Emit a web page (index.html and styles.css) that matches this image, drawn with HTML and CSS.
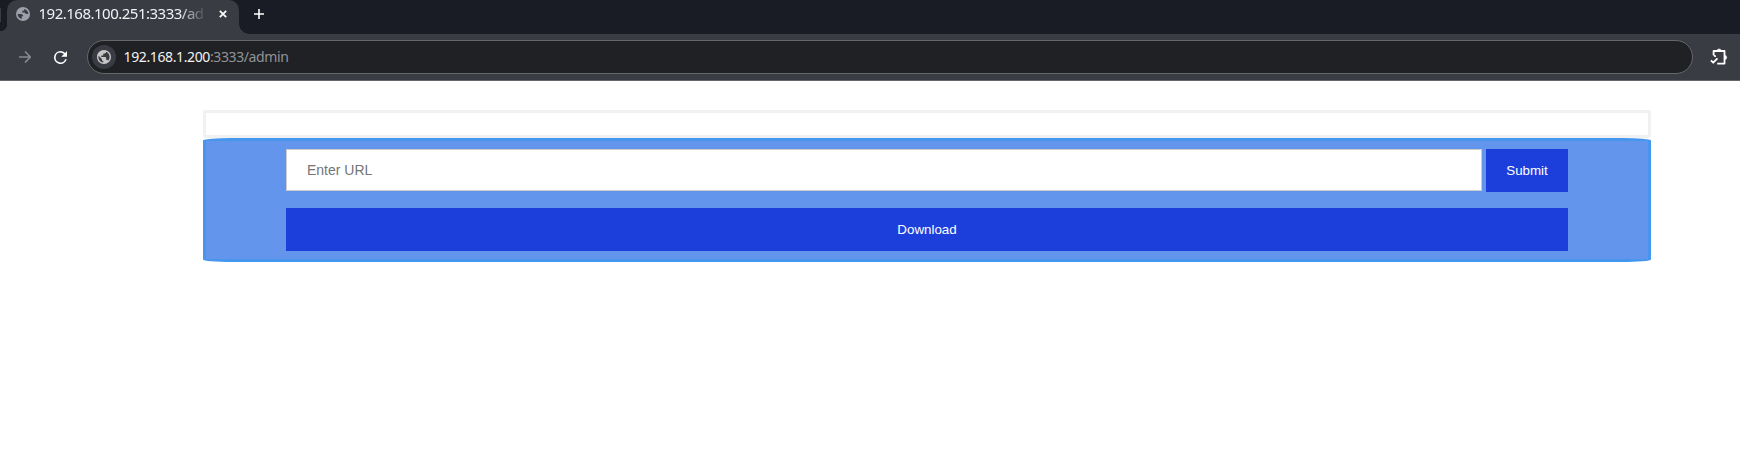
FILE: index.html
```html
<!DOCTYPE html>
<html lang="en">
<head>
<meta charset="utf-8">
<title>Admin</title>
<link rel="stylesheet" href="styles.css">
</head>
<body>
<header class="browser">
  <div class="tabs">
    <div class="previous-tab"></div>
    <div class="tab">
      <svg class="favicon" viewBox="0 0 14 14"><circle cx="7" cy="7" r="7" fill="#9da0aa"/><path d="M1.6 7h3.2c1.8 0 2.4 1 2.4 2.3H5.8v2.6C3.3 11.4 1.6 9.500 1.600 7zM8.300 1.900C10.700 2.500 12.300 4.400 12.400 6.700c-2 .5-3.400.3-3.700-1.200H6.300V3.700h1.300c.5 0 .7-.6.7-1.800z" fill="#3a3c44"/></svg>
      <span class="tab-title">192.168.100.251:3333/ad</span>
      <svg class="close" viewBox="0 0 8 8"><path d="M.8.8l6.4 6.4M7.2.8L.8 7.2" stroke="#fff" stroke-width="1.7"/></svg>
    </div>
    <svg class="plus" viewBox="0 0 10 10"><path d="M5 0v10M0 5h10" stroke="#fff" stroke-width="1.6"/></svg>
  </div>
  <div class="toolbar">
    <svg class="forward" viewBox="0 0 12 12"><path d="M0 6h11M6 .5L11.4 6 6 11.5" fill="none" stroke="#878a90" stroke-width="1.6"/></svg>
    <svg class="reload" viewBox="4 4 16 16"><path d="M17.65 6.35A7.96 7.96 0 0 0 12 4a8 8 0 1 0 7.73 10h-2.08A6 6 0 1 1 12 6c1.66 0 3.14.69 4.22 1.78L13 11h7V4z" fill="#fff"/></svg>
    <div class="address">
      <span class="site"><svg viewBox="2 2 20 20"><path fill="#c7c7c7" d="M12 2C6.48 2 2 6.48 2 12s4.48 10 10 10 10-4.48 10-10S17.52 2 12 2zm-1 17.93c-3.95-.49-7-3.85-7-7.93 0-.62.08-1.21.21-1.79L9 15v1c0 1.1.9 2 2 2v1.93zm6.9-2.54c-.26-.81-1-1.39-1.9-1.39h-1v-3c0-.55-.45-1-1-1H8v-2h2c.55 0 1-.45 1-1V7h2c1.1 0 2-.9 2-2v-.41c2.93 1.19 5 4.06 5 7.41 0 2.08-.8 3.97-2.1 5.39z"/></svg></span>
      <span class="url">192.168.1.200<span class="path">:3333/admin</span></span>
    </div>
    <svg class="extensions" viewBox="0 0 18 18"><path d="M3.6 7.2V3h10.9v12.6H7.2M3.6 7.2c1 .2 1.6.9 1.7 1.8M.9 12.4l2.3 2.3 4.3-4.4" fill="none" stroke="#fff" stroke-width="1.8" stroke-linejoin="round"/><path d="M7 3a2.1 2.1 0 0 1 4.2 0zM14.5 7.2a2.2 2.2 0 0 1 0 4.4z" fill="#fff" stroke="#fff" stroke-width=".5"/></svg>
  </div>
</header>
<main class="page">
  <form class="empty-form"></form>
  <section class="panel">
    <div class="row">
      <input class="field" type="text" placeholder="Enter URL">
      <button class="button submit">Submit</button>
    </div>
    <button class="button download">Download</button>
  </section>
</main>
</body>
</html>
```
FILE: styles.css
```css
* { box-sizing: border-box; }
body { margin: 0; background: #fff; overflow: hidden; font-family: "Liberation Sans", Arial, sans-serif; }
svg { display: block; flex: none; }
.browser { font-family: "Noto Sans", sans-serif; color: #f1f2f4; }
.tabs { height: 34px; background: #191c24; display: flex; align-items: flex-start; }
.previous-tab { width: 7px; height: 34px; background: linear-gradient(#3a3c44, #3a3c44) 0 8px / 1px 14px no-repeat, radial-gradient(circle at 0 0, transparent 7px, #3a3c44 7.5px) 0 24px / 7px 10px no-repeat; }
.tab { position: relative; width: 232px; height: 34px; background: #3a3c44; border-radius: 10px 10px 0 0; display: flex; align-items: center; padding: 0 12px 6px 9px; }
.tab::after { content: ""; position: absolute; left: 100%; bottom: 0; width: 10px; height: 10px; background: radial-gradient(circle at 100% 0, transparent 9.5px, #3a3c44 10px); }
.favicon { width: 14px; height: 14px; }
.tab-title { margin-left: 8.5px; width: 167.5px; height: 28px; line-height: 26px; font-size: 15px; letter-spacing: -.5px; white-space: nowrap; -webkit-mask: linear-gradient(90deg, #000 140px, transparent 168px); mask: linear-gradient(90deg, #000 140px, transparent 168px); }
.close { width: 8px; height: 8px; margin-left: 13px; }
.plus { width: 10px; height: 10px; margin: 9px 0 0 15px; }
.toolbar { height: 47px; background: #3a3c44; border-bottom: 1px solid #66676c; display: flex; align-items: center; padding: 0 12px 0 19px; }
.forward { width: 12px; height: 12px; }
.reload { width: 13px; height: 13px; margin-left: 23px; }
.address { width: 1606px; height: 34px; margin-left: 20px; background: #202124; border: 1px solid #65676b; border-radius: 17px; display: flex; align-items: center; padding-left: 4px; }
.site { width: 24px; height: 24px; border-radius: 50%; background: #3a3c44; display: grid; place-items: center; }
.site svg { width: 14px; height: 14px; }
.url { margin-left: 7.5px; font-size: 14px; line-height: 20px; letter-spacing: -.38px; white-space: nowrap; }
.path { color: #919397; }
.extensions { width: 18px; height: 18px; margin-left: 17px; }
.page { width: 1448px; margin: 29px 0 0 203px; }
.empty-form { height: 28px; border: 3px solid #f1f1f1; border-radius: 2px; }
.panel { height: 124px; background: #6495ed; border: 3px solid #4696ee; border-radius: 2%; padding: 8px 80px; }
.row { display: flex; gap: 4px; height: 43px; }
.field { width: 1196px; height: 42px; padding: 11px 20px 12px; border: 1px solid #ccc; border-radius: 0; background: #fff; font: 14px "Liberation Sans", Arial, sans-serif; }
.field::placeholder { color: #757575; }
.button { display: block; height: 43px; border: 0; padding: 0; background: #1c3fdc; color: #fff; font: 13.333px "Liberation Sans", Arial, sans-serif; }
.submit { width: 82px; }
.download { width: 100%; margin-top: 16px; }
```
